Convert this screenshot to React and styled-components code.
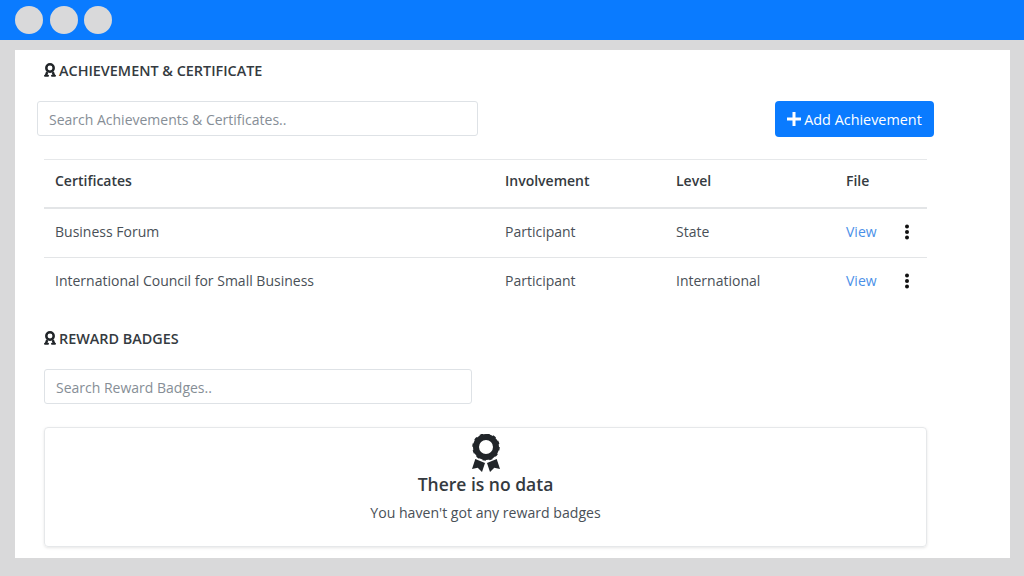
import React from 'react';
import styled, { createGlobalStyle } from 'styled-components';

const Global = createGlobalStyle`
  html, body { margin: 0; padding: 0; height: 100%; }
  body {
    background: #d9d9da;
    font-family: "Open Sans", "Noto Sans", sans-serif;
    color: #212529;
    overflow: hidden;
  }
`;

const TitleBar = styled.div`
  display: flex;
  align-items: center;
  gap: 6.500px;
  height: 40px;
  padding: 0 15px;
  box-sizing: border-box;
  background: #0a7bff;
`;

const Dot = styled.span`
  width: 28px;
  height: 28px;
  border-radius: 50%;
  background: #d9d9da;
`;

const Sheet = styled.main`
  margin: 10px 14px 0 15px;
  height: 508px;
  padding: 0 83px 0 29px;
  box-sizing: border-box;
  background: #fff;
`;

const SectionTitle = styled.h2`
  display: flex;
  align-items: center;
  gap: 3px;
  height: 20px;
  margin: 0;
  font-size: 14.400px;
  font-weight: 600;
  color: #343a40;
  padding-top: ${(p) => p.$top}px;
`;

const Toolbar = styled.div`
  display: flex;
  justify-content: space-between;
  margin: 21px -7px 0 -7px;
`;

const Search = styled.input`
  display: block;
  width: ${(p) => p.$width}px;
  height: 35px;
  margin-top: ${(p) => p.$top || 0}px;
  padding: 1px 11px 0;
  box-sizing: border-box;
  border: 1px solid #dee2e6;
  border-radius: 3px;
  background: #fff;
  font: 400 14px "Open Sans", sans-serif;
  &::placeholder { color: #868e96; opacity: 1; }
`;

const AddButton = styled.button`
  display: flex;
  align-items: center;
  justify-content: center;
  gap: 3px;
  width: 159px;
  height: 36px;
  padding: 0;
  border: 0;
  border-radius: 4px;
  background: #0a7bff;
  color: #fff;
  font: 400 14.400px "Open Sans", sans-serif;
`;

const Table = styled.div`
  margin-top: 22px;
  border-top: 1px solid #e6e8ea;
  font-size: 14px;
`;

const Row = styled.div`
  display: grid;
  grid-template-columns: 450px 171px 170px 51px 1fr;
  align-items: center;
  height: 49px;
  padding-left: 11px;
  padding-bottom: ${(p) => (p.$head ? 6 : 3)}px;
  box-sizing: border-box;
  border-bottom: ${(p) => (p.$head ? 2 : 1)}px solid ${(p) => (p.$last ? 'transparent' : '#e3e5e7')};
  font-weight: ${(p) => (p.$head ? 600 : 400)};
  color: ${(p) => (p.$head ? '#343a40' : '#495057')};
`;

const ViewLink = styled.a`
  color: #4a90e8;
`;

const Kebab = styled.svg`
  display: block;
  margin-left: 7px;
`;

const EmptyCard = styled.section`
  display: flex;
  flex-direction: column;
  align-items: center;
  height: 120px;
  margin-top: 23px;
  padding-top: 6px;
  box-sizing: border-box;
  border: 1px solid #e6e8ea;
  border-radius: 4px;
  box-shadow: 0 1px 3px rgba(0, 0, 0, 0.1);
`;

const EmptyTitle = styled.h3`
  margin: 0;
  font-size: 17.500px;
  font-weight: 600;
  line-height: 24px;
  color: #343a40;
`;

const EmptyText = styled.p`
  margin: 7px 0 0;
  font-size: 14.100px;
  line-height: 20px;
  color: #495057;
`;

function Ribbon() {
  return (
    <svg width="28" height="38" viewBox="0 0 28 38" fill="#212529" style={{ display: 'block' }}>
      <path d="M3.300 25L13 29 10 38 5.700 33.700 0 35zM24.700 25L15 29 18 38 22.300 33.700 28 35z" />
      <circle cx="14" cy="13" r="14" fill="#fff" />
      <circle cx="14" cy="13" r="10" fill="none" stroke="#212529" strokeWidth="6" />
      <circle cx="14" cy="13" r="13" fill="none" stroke="#212529" strokeWidth="1.500" strokeDasharray="3.400 3.400" />
    </svg>
  );
}

function SmallRibbon() {
  return (
    <svg width="12" height="14" viewBox="0 0 12 14" fill="none" stroke="#212529" style={{ display: 'block' }}>
      <circle cx="6" cy="5" r="3.700" strokeWidth="2.500" />
      <path d="M3.200 9L2 12.500M8.800 9L10 12.500" strokeWidth="2.400" />
      <path d="M1 12.800h3M8 12.800h3" strokeWidth="2" strokeLinecap="round" />
    </svg>
  );
}

function Dots() {
  return (
    <Kebab width="6" height="16" viewBox="0 0 6 16" fill="#111">
      <circle cx="3" cy="2.500" r="2" />
      <circle cx="3" cy="8" r="2" />
      <circle cx="3" cy="13.500" r="2" />
    </Kebab>
  );
}

const rows = [
  ['Business Forum', 'Participant', 'State'],
  ['International Council for Small Business', 'Participant', 'International'],
];

export default function App() {
  return (
    <>
      <Global />
      <TitleBar>
        <Dot />
        <Dot />
        <Dot />
      </TitleBar>
      <Sheet>
        <SectionTitle $top={10}>
          <SmallRibbon />
          ACHIEVEMENT &amp; CERTIFICATE
        </SectionTitle>
        <Toolbar>
          <Search $width={441} placeholder="Search Achievements & Certificates.." />
          <AddButton>
            <svg width="14" height="14" viewBox="0 0 14 14" fill="#fff">
              <path d="M5.500 0h3v5.500H14v3H8.500V14h-3V8.500H0v-3h5.500z" />
            </svg>
            Add Achievement
          </AddButton>
        </Toolbar>
        <Table>
          <Row $head>
            <span>Certificates</span>
            <span>Involvement</span>
            <span>Level</span>
            <span>File</span>
          </Row>
          {rows.map((r, i) => (
            <Row key={r[0]} $last={i === rows.length - 1}>
              <span>{r[0]}</span>
              <span>{r[1]}</span>
              <span>{r[2]}</span>
              <ViewLink>View</ViewLink>
              <Dots />
            </Row>
          ))}
        </Table>
        <SectionTitle $top={21}>
          <SmallRibbon />
          REWARD BADGES
        </SectionTitle>
        <Search $width={428} $top={21} placeholder="Search Reward Badges.." />
        <EmptyCard>
          <Ribbon />
          <EmptyTitle>There is no data</EmptyTitle>
          <EmptyText>You haven't got any reward badges</EmptyText>
        </EmptyCard>
      </Sheet>
    </>
  );
}
